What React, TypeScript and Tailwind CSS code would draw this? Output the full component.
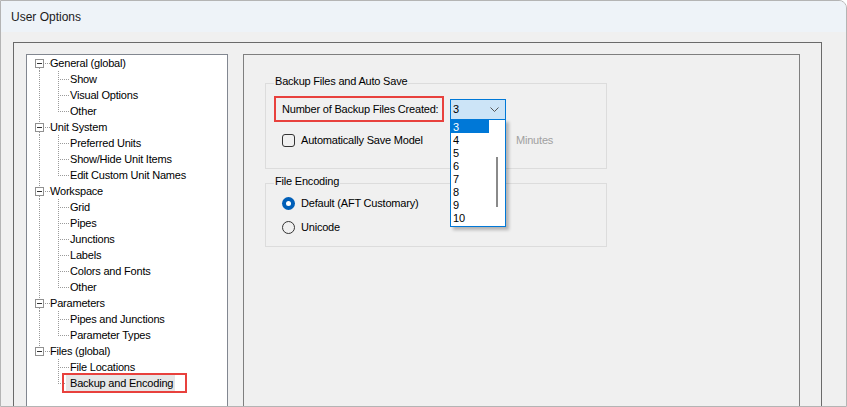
import React from 'react'

type Group = { name: string; items: string[] }

const groups: Group[] = [
  { name: 'General (global)', items: ['Show', 'Visual Options', 'Other'] },
  { name: 'Unit System', items: ['Preferred Units', 'Show/Hide Unit Items', 'Edit Custom Unit Names'] },
  { name: 'Workspace', items: ['Grid', 'Pipes', 'Junctions', 'Labels', 'Colors and Fonts', 'Other'] },
  { name: 'Parameters', items: ['Pipes and Junctions', 'Parameter Types'] },
  { name: 'Files (global)', items: ['File Locations', 'Backup and Encoding'] },
]

const dots = { stroke: '#9a9a9a', strokeWidth: 1, strokeDasharray: '1 1' }

function RootCell({ parent, first, last }: { parent: boolean; first: boolean; last: boolean }) {
  return (
    <svg width="23" height="16" className="shrink-0">
      {parent ? (
        <>
          {!first && <line x1="12.5" y1="0" x2="12.5" y2="4" {...dots} />}
          {!last && <line x1="12.5" y1="13" x2="12.5" y2="16" {...dots} />}
          <rect x="8.5" y="4.5" width="8" height="8" fill="#ffffff" stroke="#919191" />
          <line x1="10" y1="8.5" x2="15" y2="8.5" stroke="#333333" />
          <line x1="18" y1="8.5" x2="23" y2="8.5" {...dots} />
        </>
      ) : (
        !last && <line x1="12.5" y1="0" x2="12.5" y2="16" {...dots} />
      )}
    </svg>
  )
}

function ChildCell({ last }: { last: boolean }) {
  return (
    <svg width="20" height="16" className="shrink-0">
      <line x1="8.5" y1="0" x2="8.5" y2={last ? 9 : 16} {...dots} />
      <line x1="10" y1="8.5" x2="19" y2="8.5" {...dots} />
    </svg>
  )
}

function Tree() {
  return (
    <div className="h-[360px] w-[202px] shrink-0 border border-[#828790] bg-white text-black">
      {groups.map((g, gi) => {
        const lastGroup = gi === groups.length - 1
        return (
          <div key={g.name}>
            <div className="flex h-4 items-center">
              <RootCell parent first={gi === 0} last={lastGroup} />
              <span>{g.name}</span>
            </div>
            {g.items.map((item, ii) => {
              const lastItem = ii === g.items.length - 1
              const selected = item === 'Backup and Encoding'
              return (
                <div key={item + ii} className="flex h-4 items-center">
                  <RootCell parent={false} first={false} last={lastGroup} />
                  <ChildCell last={lastItem} />
                  {selected ? (
                    <span className="-ml-[8px] flex h-[20px] w-[125px] items-center border-2 border-[#e8413d] pl-[2px] pr-[4px]">
                      <span className="bg-[#e6e6e6] pl-[4px] pr-[2px] leading-[16px]">{item}</span>
                    </span>
                  ) : (
                    <span>{item}</span>
                  )}
                </div>
              )
            })}
          </div>
        )
      })}
    </div>
  )
}

function GroupTitle({ children }: { children: React.ReactNode }) {
  return <div className="-mt-[10px] ml-[8px] w-fit bg-[#f0f0f0] px-[1px] leading-[14px]">{children}</div>
}

const counts = ['3', '4', '5', '6', '7', '8', '9', '10']

function Combo() {
  return (
    <div className="relative ml-[6px] flex h-[21px] w-[56px] items-center justify-between border border-[#0078d7] bg-[#cce4f7] pl-[2px] pr-[6px]">
      <span>3</span>
      <svg width="9" height="5" viewBox="0 0 9 5">
        <path d="M0.5 0.5 L4.5 4.5 L8.5 0.5" fill="none" stroke="#555555" />
      </svg>
      <div className="absolute left-[-1px] top-[19px] z-10 flex h-[108px] w-[56px] border border-[#0078d7] bg-white shadow-[3px_3px_3px_rgba(0,0,0,0.25)]">
        <div className="w-[38px]">
          {counts.map((c, i) => (
            <div
              key={c}
              className={
                i === 0
                  ? 'h-[13px] bg-[#0078d7] pl-[2px] pt-[1px] leading-[13px] text-white'
                  : 'h-[13px] pl-[2px] pt-[1px] leading-[13px] text-black'
              }
            >
              {c}
            </div>
          ))}
        </div>
        <div className="flex w-[16px] justify-center pt-[37px]">
          <div className="h-[50px] w-[2px] bg-[#8a8a8a]" />
        </div>
      </div>
    </div>
  )
}

export default function App() {
  return (
    <div className="h-[407px] w-[847px] overflow-hidden whitespace-nowrap rounded-tr-[8px] border border-[#b4b4b4] bg-[#f0f0f0] font-['Liberation_Sans',Arial,sans-serif] text-[11px] tracking-[-0.2px] text-black">
      <div className="flex h-[31px] items-center bg-[#eef3f8] pl-[10px] text-[12px] tracking-normal text-[#1b1b1b]">User Options</div>
      <div className="pl-[12px] pt-[10px]">
        <div className="flex h-[400px] w-[809px] gap-[15px] border-l border-r border-t border-[#6a6a6a] pl-[12px] pt-[11px]">
          <Tree />
          <div className="h-[360px] w-[557px] shrink-0 border border-[#7f7f7f]">
            <div className="ml-[21px] mt-[28px] h-[86px] w-[342px] border border-[#dcdcdc]">
              <GroupTitle>Backup Files and Auto Save</GroupTitle>
              <div className="ml-[8px] mt-[8px] flex items-center">
                <div className="flex h-[26px] w-[170px] items-center border-2 border-[#e8413d] pl-[6px]">
                  Number of Backup Files Created:
                </div>
                <Combo />
              </div>
              <div className="ml-[16px] mt-[12px] flex h-[13px] items-center">
                <div className="flex w-[234px] items-center gap-[6px]">
                  <div className="h-[13px] w-[13px] rounded-[3px] border border-[#333333]" />
                  <span>Automatically Save Model</span>
                </div>
                <span className="text-[#a0a0a0]">Minutes</span>
              </div>
            </div>
            <div className="ml-[21px] mt-[14px] h-[64px] w-[342px] border border-[#dcdcdc]">
              <GroupTitle>File Encoding</GroupTitle>
              <div className="ml-[16px] mt-[9px] flex h-[13px] items-center gap-[6px]">
                <div className="flex h-[13px] w-[13px] items-center justify-center rounded-full bg-[#005fb8]">
                  <div className="h-[5px] w-[5px] rounded-full bg-white" />
                </div>
                <span>Default (AFT Customary)</span>
              </div>
              <div className="ml-[16px] mt-[11px] flex h-[13px] items-center gap-[6px]">
                <div className="h-[13px] w-[13px] rounded-full border border-[#333333]" />
                <span>Unicode</span>
              </div>
            </div>
          </div>
        </div>
      </div>
    </div>
  )
}
